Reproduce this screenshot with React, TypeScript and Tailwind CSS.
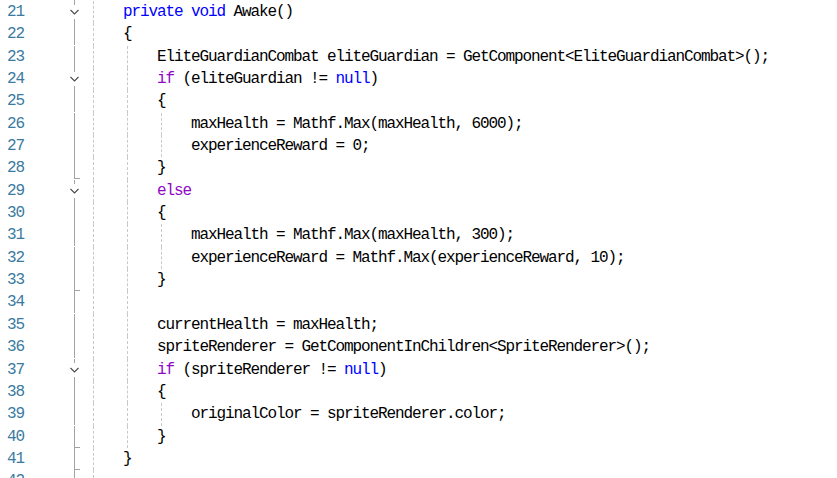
import React from "react";

type Tok = { t: string; c?: "kw" | "ctl" };
type Marker = "chev" | "tick" | "line";
type Row = { n: number; level: number; toks: Tok[]; marker: Marker; g1: boolean; g2: boolean };

const K = (t: string): Tok => ({ t, c: "kw" });
const C = (t: string): Tok => ({ t, c: "ctl" });
const P = (t: string): Tok => ({ t });

const rows: Row[] = [
  { n: 21, level: 1, toks: [K("private"), P(" "), K("void"), P(" Awake()")], marker: "chev", g1: false, g2: false },
  { n: 22, level: 1, toks: [P("{")], marker: "line", g1: false, g2: false },
  { n: 23, level: 2, toks: [P("EliteGuardianCombat eliteGuardian = GetComponent<EliteGuardianCombat>();")], marker: "line", g1: true, g2: false },
  { n: 24, level: 2, toks: [C("if"), P(" (eliteGuardian != "), K("null"), P(")")], marker: "chev", g1: true, g2: false },
  { n: 25, level: 2, toks: [P("{")], marker: "line", g1: true, g2: false },
  { n: 26, level: 3, toks: [P("maxHealth = Mathf.Max(maxHealth, 6000);")], marker: "line", g1: true, g2: true },
  { n: 27, level: 3, toks: [P("experienceReward = 0;")], marker: "line", g1: true, g2: true },
  { n: 28, level: 2, toks: [P("}")], marker: "tick", g1: true, g2: false },
  { n: 29, level: 2, toks: [C("else")], marker: "chev", g1: true, g2: false },
  { n: 30, level: 2, toks: [P("{")], marker: "line", g1: true, g2: false },
  { n: 31, level: 3, toks: [P("maxHealth = Mathf.Max(maxHealth, 300);")], marker: "line", g1: true, g2: true },
  { n: 32, level: 3, toks: [P("experienceReward = Mathf.Max(experienceReward, 10);")], marker: "line", g1: true, g2: true },
  { n: 33, level: 2, toks: [P("}")], marker: "tick", g1: true, g2: false },
  { n: 34, level: 2, toks: [], marker: "line", g1: true, g2: false },
  { n: 35, level: 2, toks: [P("currentHealth = maxHealth;")], marker: "line", g1: true, g2: false },
  { n: 36, level: 2, toks: [P("spriteRenderer = GetComponentInChildren<SpriteRenderer>();")], marker: "line", g1: true, g2: false },
  { n: 37, level: 2, toks: [C("if"), P(" (spriteRenderer != "), K("null"), P(")")], marker: "chev", g1: true, g2: false },
  { n: 38, level: 2, toks: [P("{")], marker: "line", g1: true, g2: false },
  { n: 39, level: 3, toks: [P("originalColor = spriteRenderer.color;")], marker: "line", g1: true, g2: true },
  { n: 40, level: 2, toks: [P("}")], marker: "tick", g1: true, g2: false },
  { n: 41, level: 1, toks: [P("}")], marker: "tick", g1: false, g2: false },
  { n: 42, level: 1, toks: [], marker: "line", g1: false, g2: false },
];

const H = 22.35;

function MarkerSvg({ kind }: { kind: Marker }) {
  const stroke = "#a3a3a3";
  return (
    <svg width={17} height={H} viewBox={`0 0 17 ${H}`} className="block">
      {kind === "chev" ? (
        <>
          <line x1={8.5} y1={0} x2={8.5} y2={4} stroke={stroke} strokeWidth={1} shapeRendering="crispEdges" />
          <line x1={8.5} y1={18.5} x2={8.5} y2={H} stroke={stroke} strokeWidth={1} shapeRendering="crispEdges" />
          <polyline points="4.5,9 8.5,13 12.5,9" fill="none" stroke="#4a4a4a" strokeWidth={1.1} />
        </>
      ) : (
        <line x1={8.5} y1={0} x2={8.5} y2={H} stroke={stroke} strokeWidth={1} shapeRendering="crispEdges" />
      )}
      {kind === "tick" && (
        <line x1={8.5} y1={21.6} x2={14} y2={21.6} stroke={stroke} strokeWidth={1} shapeRendering="crispEdges" />
      )}
    </svg>
  );
}

function Guide({ show }: { show: boolean }) {
  return (
    <div className="h-full w-[34px] shrink-0">
      {show && <div className="ml-[4px] h-full border-l border-dashed border-[#c9c9c9]" />}
    </div>
  );
}

function CodeRow({ r }: { r: Row }) {
  const guides: boolean[] = [true, r.g1, r.g2].slice(0, r.level);
  return (
    <div className="flex h-[22.35px] items-stretch">
      <div className="w-[24px] shrink-0 text-right leading-[22.35px] text-[#3a7aa0]">{r.n}</div>
      <div className="w-[42px] shrink-0" />
      <div className="w-[17px] shrink-0">
        <MarkerSvg kind={r.marker} />
      </div>
      <div className="w-[6px] shrink-0" />
      {guides.map((g, i) => (
        <Guide key={i} show={g} />
      ))}
      <span className="whitespace-pre leading-[22.35px] text-black">
        {r.toks.map((t, i) => (
          <span
            key={i}
            className={t.c === "kw" ? "text-[#0000ff]" : t.c === "ctl" ? "text-[#8f08c4]" : "text-black"}
          >
            {t.t}
          </span>
        ))}
      </span>
    </div>
  );
}

export default function App() {
  return (
    <div
      className="h-[478px] w-[837px] overflow-hidden bg-white text-[16px] tracking-[-1.1px]"
      style={{ fontFamily: '"Liberation Mono", "DejaVu Sans Mono", monospace' }}
    >
      <div className="flex h-px items-stretch">
        <div className="w-[83px] shrink-0">
          <div className="ml-[74px] h-full w-px bg-[#a3a3a3]" />
        </div>
      </div>
      {rows.map((r) => (
        <CodeRow key={r.n} r={r} />
      ))}
    </div>
  );
}
